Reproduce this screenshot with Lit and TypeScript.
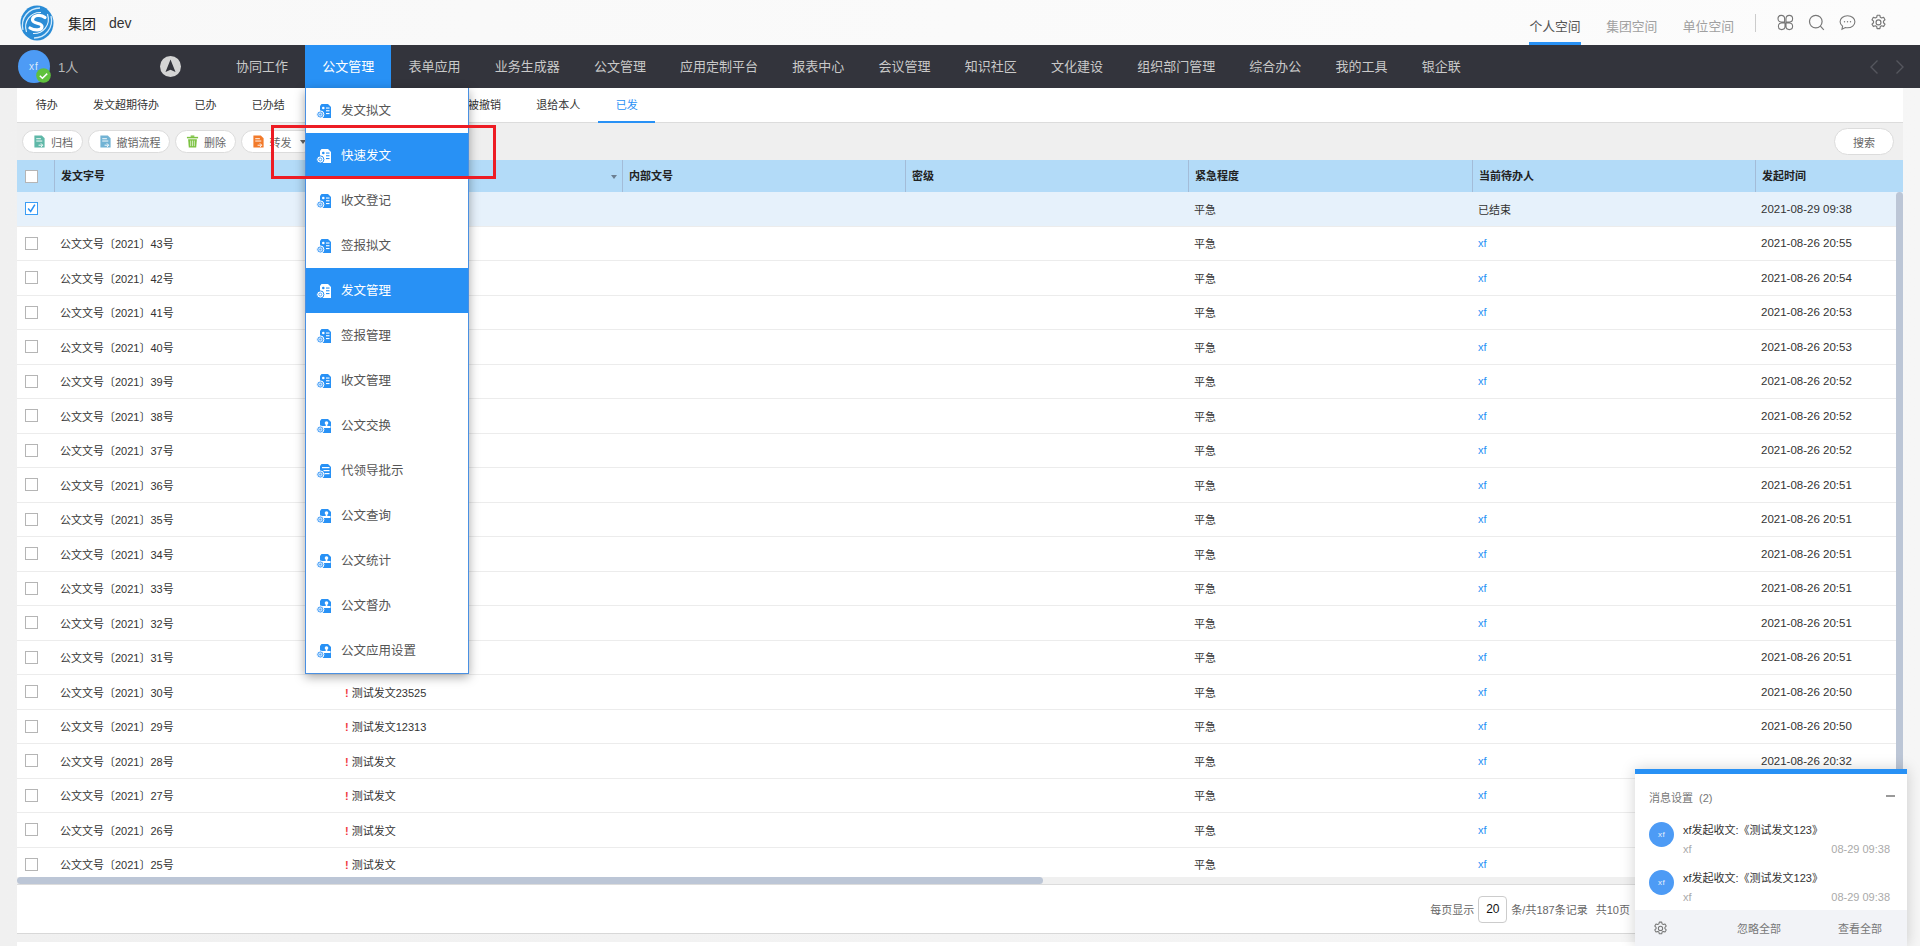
import { LitElement, html, css, svg } from "lit";
import { customElement } from "lit/decorators.js";

const NAV = ["协同工作","公文管理","表单应用","业务生成器","公文管理","应用定制平台","报表中心","会议管理","知识社区","文化建设","组织部门管理","综合办公","我的工具","银企联"];
const TABS = ["待办","发文超期待办","已办","已办结","发文草稿","被退回","被撤销","退给本人","已发"];
const MENU: [string,string][] = [["发文拟文","doc"],["快速发文","doc"],["收文登记","doc"],["签报拟文","doc"],["发文管理","doc"],["签报管理","doc"],["收文管理","doc"],["公文交换","stamp"],["代领导批示","list"],["公文查询","stamp"],["公文统计","stamp"],["公文督办","stamp"],["公文应用设置","stamp"]];
const TIMES = ["09:38","20:55","20:54","20:53","20:53","20:52","20:52","20:52","20:51","20:51","20:51","20:51","20:51","20:51","20:50","20:50","20:32","20:31","20:30","20:29"];
const COLS = ["发文字号","标题","内部文号","密级","紧急程度","当前待办人","发起时间"];

const ROWS = TIMES.map((t, i) => ({
  no: i === 0 ? "" : `公文文号〔2021〕${44 - i}号`,
  title: i === 14 ? "测试发文23525" : i === 15 ? "测试发文12313" : "测试发文",
  who: i === 0 ? "已结束" : "xf",
  time: `2021-08-${i === 0 ? "29" : "26"} ${t}`,
}));

const gear = (c = "#666") => html`<svg class="ico" viewBox="0 0 16 16" fill="none" stroke=${c} stroke-width="1.1"><path d="M6.7 1.2h2.6l.4 1.9 1.3.7 1.8-.7 1.3 2.3-1.4 1.3v1.5l1.4 1.3-1.3 2.3-1.8-.7-1.3.7-.4 1.9H6.7l-.4-1.9-1.3-.7-1.8.7-1.3-2.3 1.4-1.3V6.7L1.9 5.4l1.3-2.3 1.8.7 1.3-.7z" stroke-linejoin="round"/><circle cx="8" cy="7.9" r="2.3"/></svg>`;

function menuIcon(kind: string, active: boolean) {
  const a = active ? "#ffffff" : "#2891f5";
  const b = active ? "#2891f5" : "#ffffff";
  const ring = active ? "#2891f5" : "#ffffff";
  const glyph = kind === "stamp"
    ? svg`<circle cx="10.5" cy="5" r="1.8" fill=${b}/><rect x="6.5" y="8" width="8" height="2" fill=${b}/><rect x="9.7" y="6" width="1.6" height="2.5" fill=${b}/>`
    : kind === "list"
    ? svg`<rect x="6" y="4" width="7.5" height="1.2" fill=${b}/><rect x="7.5" y="7" width="6" height="1.2" fill=${b}/><rect x="8.5" y="10" width="5" height="1.2" fill=${b}/>`
    : svg`<circle cx="7.3" cy="5" r="1.3" fill=${b}/><rect x="10" y="4.5" width="3.5" height="1.1" fill=${b}/><rect x="10" y="7.2" width="3.5" height="1.1" fill=${b}/><rect x="10" y="10" width="3.5" height="1.1" fill=${b}/>`;
  return html`<svg class="micon" viewBox="0 0 16 16"><path d="M5.5 1H12l3 3v11H4V3z" fill=${a}/>${glyph}<circle cx="4.3" cy="11.5" r="3.6" fill=${active ? "#ffffff" : "#5aa9f8"} stroke=${ring} stroke-width="1"/><circle cx="4.3" cy="11.5" r="1.5" fill="none" stroke=${active ? "#2891f5" : "#ffffff"} stroke-width=".8"/></svg>`;
}

function toolIcon(c: string, kind: string) {
  if (kind === "trash") {
    return html`<svg class="ticon" viewBox="0 0 14 14"><rect x="5" y="0.5" width="4" height="1.5" fill=${c}/><rect x="1" y="2" width="12" height="1.6" fill=${c}/><path d="M2.3 4.6h9.4L11 13.5H3z" fill=${c}/><path d="M5 6v6M7 6v6M9 6v6" stroke="#fff" stroke-width=".7"/></svg>`;
  }
  return html`<svg class="ticon" viewBox="0 0 14 14"><path d="M1.5 .5h8l3 3v10h-11z" fill=${c}/><path d="M3.5 4h5M3.5 6.5h6.5" stroke="#fff" stroke-width="1"/><path d="M6 11h4M8.5 9l2 2-2 2" stroke="#fff" stroke-width="1" fill="none"/></svg>`;
}

@customElement("app-root")
export class AppRoot extends LitElement {
  static styles = css`
    :host { display: block; position: relative; width: 1920px; height: 946px; overflow: hidden;
      font-family: "Liberation Sans", "Noto Sans CJK SC", sans-serif; font-size: 11px; color: #333;
      background: linear-gradient(90deg, #f0f0f0, #f6f6f6); }
    * { box-sizing: border-box; }
    .page { display: flex; flex-direction: column; height: 946px; }

    .top { height: 45px; flex: none; display: flex; align-items: center; background: linear-gradient(90deg, #f8f8f8, #fcfcfc); padding-left: 20px; }
    .logo { width: 34px; height: 36px; flex: none; }
    .org { margin-left: 14px; font-size: 14px; color: #222; }
    .dev { margin-left: 13px; font-size: 14px; color: #333; }
    .spaces { margin-left: auto; display: flex; height: 45px; gap: 25.5px; }
    .space { height: 45px; padding-top: 18px; line-height: 17px; font-size: 12.8px; color: #a0a0a0; border-bottom: 3px solid transparent; }
    .space.on { color: #555; border-bottom-color: #2891f5; }
    .divider { width: 1px; height: 18px; background: #ccc; margin: 0 21px 0 21px; }
    .tools { display: flex; gap: 14px; padding-right: 33px; align-items: center; }
    .ico { width: 17px; height: 17px; display: block; }

    .nav { height: 43px; flex: none; display: flex; align-items: stretch; background: #33343c; }
    .user { width: 219px; flex: none; display: flex; align-items: center; padding: 0 38px 0 18px; }
    .avatar { position: relative; width: 32px; height: 33px; border-radius: 50%; background: #4d9bf5; color: #dce9fa; font-size: 10px; display: flex; align-items: center; justify-content: center; letter-spacing: 1px; }
    .check { position: absolute; left: 18px; top: 18px; width: 15px; height: 15px; }
    .count { margin-left: 8px; font-size: 13px; color: #b8b8b8; }
    .compass { margin-left: auto; width: 21px; height: 21px; }
    .navitem { padding: 0 17.1px; font-size: 13px; line-height: 43px; color: #c9c9c9; white-space: nowrap; }
    .navitem.on { background: #2891f5; color: #fff; }
    .arrows { margin-left: auto; display: flex; align-items: center; gap: 14px; padding-right: 14px; }
    .arrow { width: 12px; height: 16px; }

    .main { flex: 1; min-height: 0; display: flex; flex-direction: column; padding: 0 17px; }
    .tabs { height: 35px; flex: none; display: flex; background: #fff; padding-left: 1px; border-bottom: 1px solid #dcdcdc; }
    .tab { padding: 0 17.7px; line-height: 34px; color: #333; white-space: nowrap; height: 35px; }
    .tab.on { color: #2891f5; border-bottom: 2px solid #2891f5; }
    .bar { height: 37px; flex: none; display: flex; align-items: center; gap: 5px; padding: 0 9px 0 5px; background: #efefef; }
    .btn { height: 23px; display: flex; align-items: center; gap: 5px; background: #fff; border: 1px solid #dcdcdc; border-radius: 12px; color: #666; padding: 0 8.5px 0 10px; white-space: nowrap; }
    .ticon { width: 13px; height: 13px; flex: none; }
    .caret { width: 0; height: 0; border-left: 3.5px solid transparent; border-right: 3.5px solid transparent; border-top: 4px solid #666; margin-left: 3px; }
    .search { margin-left: auto; height: 27px; width: 60px; justify-content: center; border-radius: 14px; padding: 0; }

    .tablewrap { position: relative; flex: 1; min-height: 0; overflow: hidden; background: #fff; }
    .row { display: grid; grid-template-columns: 37px 285px 283px 283px 283px 284px 283px 148px; align-items: center; height: 34.5px; border-bottom: 1px solid #ececec; background: #fff; }
    .row.sel { background: #e6f1fb; }
    .row.head { height: 32px; background: #b3dbf8; border: 0; font-weight: 700; color: #222; }
    .head .cell { height: 32px; line-height: 32px; border-left: 1px solid #a3bcd8; }
    .head .cell:first-child { border-left: 0; }
    .cell { padding-left: 6px; white-space: nowrap; position: relative; }
    .cell.box { padding-left: 8px; display: flex; align-items: center; }
    .head .cell.box { display: flex; }
    .cb { width: 13px; height: 13px; background: #fff; border: 1px solid #b5b5b5; display: block; }
    .cb.on { border-color: #3b9df5; }
    .sort { position: absolute; right: 5px; top: 15px; width: 0; height: 0; border-left: 3.5px solid transparent; border-right: 3.5px solid transparent; border-top: 4px solid #6c7f92; }
    .bang { color: #f0393f; font-weight: 700; margin-right: 3px; }
    .who { color: #2891f5; }
    .date { font-size: 11.5px; }
    .vthumb { position: absolute; right: 0; top: 32px; width: 7px; height: 640px; background: #bcc6d6; border-radius: 4px 4px 0 0; }

    .hscroll { height: 8px; flex: none; background: #f0f0f0; border-bottom: 1px solid #dcdcdc; }
    .hthumb { width: 1026px; height: 7px; background: #bcc6d6; border-radius: 4px; }
    .foot { height: 49px; flex: none; background: #fff; border-bottom: 1px solid #d8d8d8; display: flex; align-items: center; justify-content: flex-end; padding-right: 273px; color: #666; gap: 4px; }
    .size { width: 29px; height: 27px; border: 1px solid #ccc; border-radius: 4px; display: flex; align-items: center; justify-content: center; color: #111; font-size: 12px; }
    .pages { margin-left: 4px; }
    .gap { height: 8px; flex: none; }
    .tail { height: 4px; flex: none; background: #fff; }

    .menu { position: absolute; left: 305px; top: 88px; width: 164px; background: #fff; border: 1px solid #4a90e2; border-top: 0; box-shadow: 0 3px 10px rgba(0,0,0,.35); display: flex; flex-direction: column; }
    .mitem { height: 45px; flex: none; display: flex; align-items: center; padding: 0 0 2px 10px; gap: 9px; font-size: 12.5px; color: #555; }
    .mitem.on { background: #2891f5; color: #fff; }
    .micon { width: 16px; height: 16px; flex: none; margin-top: 3px; }
    .redbox { position: absolute; left: 271px; top: 125px; width: 225px; height: 54px; border: 3px solid #ed1c24; pointer-events: none; }

    .panel { position: absolute; left: 1635px; top: 769px; width: 272px; height: 177px; background: #fff; border-top: 5px solid #2891f5; box-shadow: 0 0 14px rgba(0,0,0,.18); display: flex; flex-direction: column; }
    .phead { height: 48px; flex: none; display: flex; align-items: center; justify-content: space-between; padding: 0 12px 2px 14px; color: #777; }
    .pcount { margin-left: 6px; }
    .minus { width: 9px; height: 2px; background: #999; margin-bottom: 3px; }
    .msgs { flex: 1; min-height: 0; overflow: hidden; padding: 0 17px 0 14px; }
    .msg { display: flex; gap: 9px; height: 48px; }
    .pava { width: 25px; height: 25px; border-radius: 50%; background: #4d9bf5; color: #e6f0fc; font-size: 8px; letter-spacing: .5px; display: flex; align-items: center; justify-content: center; flex: none; }
    .mbody { flex: 1; }
    .mtitle { color: #333; line-height: 16px; }
    .msub { display: flex; justify-content: space-between; color: #aaa; line-height: 14px; margin-top: 4px; font-size: 11px; }
    .pfoot { height: 36px; flex: none; background: #f2f3f7; display: flex; align-items: center; padding: 0 25px 0 18px; color: #777; }
    .pfoot .ico { width: 15px; height: 15px; }
    .ignore { margin-left: 69px; }
    .viewall { margin-left: auto; }
  `;

  render() {
    return html`
      <div class="page">
        <header class="top">
          <svg class="logo" viewBox="0 0 34 36">
            <ellipse cx="17" cy="18" rx="16.500" ry="17.500" fill="#2a8cd6"/>
            <path d="M3 25C0 13 9 3 20 3" fill="none" stroke="#cfe9fb" stroke-width="1.300"/>
            <path d="M31 11c3 12-6 22-17 22" fill="none" stroke="#cfe9fb" stroke-width="1.300"/>
            <path d="M6.500 27C3 16 11 7 21 7.500" fill="none" stroke="#e6f4fd" stroke-width="1.100"/>
            <path d="M27.500 9C31 20 23 29 13 28.500" fill="none" stroke="#e6f4fd" stroke-width="1.100"/>
            <path d="M25 12.500c-4-3.500-12-2.500-12.500 2 -.5 5 9.500 2.500 9.500 7 0 4-7 4.500-12 1.500" fill="none" stroke="#fff" stroke-width="3.200" stroke-linecap="round"/>
          </svg>
          <span class="org">集团</span><span class="dev">dev</span>
          <div class="spaces">
            <div class="space on">个人空间</div>
            <div class="space">集团空间</div>
            <div class="space">单位空间</div>
          </div>
          <div class="divider"></div>
          <div class="tools">
            <svg class="ico" viewBox="0 0 17 17" fill="none" stroke="#777" stroke-width="1.100"><path d="M8 8H4.300A3.300 3.300 0 1 1 7.600 4.700V8zM9 8V4.700a3.300 3.300 0 1 1 3.300 3.300H9zM8 9v3.300a3.300 3.300 0 1 1-3.300-3.300H8zM9 9h3.300A3.300 3.300 0 1 1 9 12.300V9z"/></svg>
            <svg class="ico" viewBox="0 0 17 17" fill="none" stroke="#777" stroke-width="1.200"><circle cx="7.800" cy="7.600" r="6.300"/><path d="M12.400 12.200l3.400 3.600"/></svg>
            <svg class="ico" viewBox="0 0 17 17" fill="none" stroke="#777" stroke-width="1.100"><path d="M8.500 1.800c4.200 0 7.400 2.600 7.400 6s-3.200 6-7.400 6c-.8 0-1.500-.1-2.200-.3L3 15.200l.6-3C2 11.100 1.100 9.600 1.100 7.800c0-3.400 3.200-6 7.400-6z"/><circle cx="5.500" cy="7.800" r=".7" fill="#777" stroke="none"/><circle cx="8.500" cy="7.800" r=".7" fill="#777" stroke="none"/><circle cx="11.500" cy="7.800" r=".7" fill="#777" stroke="none"/></svg>
            ${gear("#777")}
          </div>
        </header>

        <nav class="nav">
          <div class="user">
            <div class="avatar">xf
              <svg class="check" viewBox="0 0 15 15"><circle cx="7.500" cy="7.500" r="7.300" fill="#5fc13c"/><path d="M3.800 7.800l2.600 2.400 4.800-4.600" fill="none" stroke="#fff" stroke-width="1.500"/></svg>
            </div>
            <span class="count">1人</span>
            <svg class="compass" viewBox="0 0 21 21"><circle cx="10.500" cy="10.500" r="10.500" fill="#d4d4d4"/><path d="M10.500 3.500L15.500 16l-5-2.200L5.500 16z" fill="#33343c"/></svg>
          </div>
          ${NAV.map((n, i) => html`<div class="navitem ${i === 1 ? "on" : ""}">${n}</div>`)}
          <div class="arrows">
            <svg class="arrow" viewBox="0 0 12 16" fill="none" stroke="#55565e" stroke-width="1.400"><path d="M9.500 1.500L3 8l6.500 6.500"/></svg>
            <svg class="arrow" viewBox="0 0 12 16" fill="none" stroke="#55565e" stroke-width="1.400"><path d="M2.500 1.500L9 8l-6.500 6.500"/></svg>
          </div>
        </nav>

        <main class="main">
          <div class="tabs">
            ${TABS.map((t, i) => html`<div class="tab ${i === TABS.length - 1 ? "on" : ""}">${t}</div>`)}
          </div>
          <div class="bar">
            <div class="btn">${toolIcon("#5fb8a8", "doc")}<span>归档</span></div>
            <div class="btn">${toolIcon("#72b3d4", "doc")}<span>撤销流程</span></div>
            <div class="btn">${toolIcon("#7cc242", "trash")}<span>删除</span></div>
            <div class="btn">${toolIcon("#f27a2a", "doc")}<span>转发</span><i class="caret"></i></div>
            <div class="btn search">搜索</div>
          </div>
          <div class="tablewrap">
            <div class="row head">
              <div class="cell box"><i class="cb"></i></div>
              ${COLS.map((c, i) => html`<div class="cell">${c}${i === 1 ? html`<i class="sort"></i>` : ""}</div>`)}
            </div>
            ${ROWS.map((r, i) => html`
              <div class="row ${i === 0 ? "sel" : ""}">
                <div class="cell box">
                  ${i === 0
                    ? html`<svg class="cb on" viewBox="0 0 13 13"><path d="M2.500 6.500l3 3.500 5-8" fill="none" stroke="#2891f5" stroke-width="1.800"/></svg>`
                    : html`<i class="cb"></i>`}
                </div>
                <div class="cell">${r.no}</div>
                <div class="cell"><span class="bang">!</span>${r.title}</div>
                <div class="cell"></div>
                <div class="cell"></div>
                <div class="cell">平急</div>
                <div class="cell ${i === 0 ? "" : "who"}">${r.who}</div>
                <div class="cell date">${r.time}</div>
              </div>`)}
            <div class="vthumb"></div>
          </div>
          <div class="hscroll"><div class="hthumb"></div></div>
          <div class="foot">
            <span>每页显示</span><span class="size">20</span><span>条/共187条记录</span><span class="pages">共10页</span>
          </div>
          <div class="gap"></div>
          <div class="tail"></div>
        </main>
      </div>

      <div class="menu">
        ${MENU.map(([t, k], i) => {
          const on = i === 1 || i === 4;
          return html`<div class="mitem ${on ? "on" : ""}">${menuIcon(k, on)}<span>${t}</span></div>`;
        })}
      </div>
      <div class="redbox"></div>

      <aside class="panel">
        <div class="phead"><span>消息设置<span class="pcount">(2)</span></span><i class="minus"></i></div>
        <div class="msgs">
          ${[0, 1].map(() => html`
            <div class="msg">
              <div class="pava">xf</div>
              <div class="mbody">
                <div class="mtitle">xf发起收文:《测试发文123》</div>
                <div class="msub"><span>xf</span><span>08-29 09:38</span></div>
              </div>
            </div>`)}
        </div>
        <div class="pfoot">
          ${gear("#777")}
          <span class="ignore">忽略全部</span>
          <span class="viewall">查看全部</span>
        </div>
      </aside>
    `;
  }
}
